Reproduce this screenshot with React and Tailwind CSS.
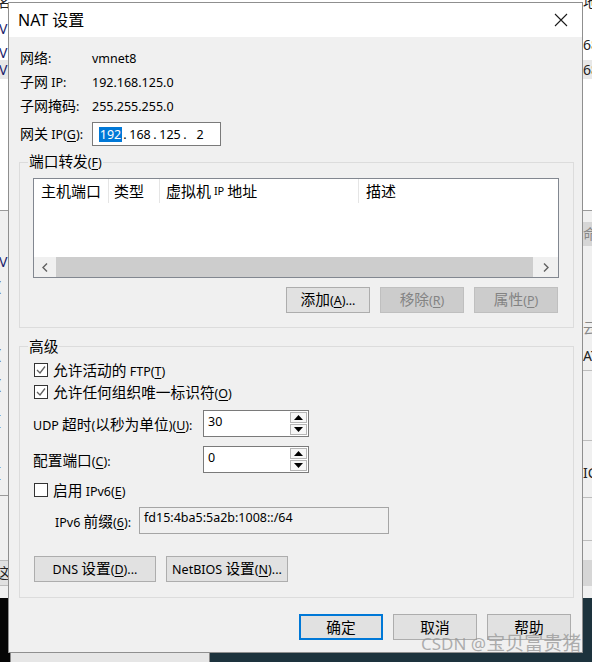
import React from 'react';

const CJK_RE = /([\u2E80-\u9FFF\uFF00-\uFFEF\u3000-\u303F]+)/;

function T({ s, cjk = 'text-[14.7px]', lat = 'text-[12.5px]' }) {
  const parts = s.split(CJK_RE).filter((p) => p !== '');
  return (
    <>
      {parts.map((p, i) =>
        CJK_RE.test(p) ? (
          <span key={i} className={cjk + " font-['Noto_Sans_CJK_SC',sans-serif]"}>
            {p}
          </span>
        ) : (
          <span key={i} className={lat + " font-['Noto_Sans',sans-serif] whitespace-pre"}>
            {p}
          </span>
        )
      )}
    </>
  );
}

function Mn({ pre, k, post = ')' }) {
  return (
    <span className="whitespace-nowrap leading-[18px]">
      <T s={pre + '('} />
      <span className="text-[12.5px] font-['Noto_Sans',sans-serif] underline underline-offset-2">{k}</span>
      <T s={post} />
    </span>
  );
}

function Btn({ children, w = 'w-[84px]', disabled = false, primary = false }) {
  let cls = 'h-[26px] flex items-center justify-center shrink-0 ' + w + ' ';
  if (disabled) cls += 'bg-[#cccccc] border border-[#bfbfbf] text-[#838383]';
  else if (primary) cls += 'bg-[#e1e1e1] border-2 border-[#0078d7] text-black';
  else cls += 'bg-[#e1e1e1] border border-[#adadad] text-black';
  return <div className={cls}>{children}</div>;
}

function Check({ checked }) {
  return (
    <div className="w-[14px] h-[14px] border border-[#333333] bg-white flex items-center justify-center shrink-0">
      {checked && (
        <svg width="12" height="12" viewBox="0 0 12 12">
          <polyline points="2,6 5,9 10,2.5" fill="none" stroke="#606060" strokeWidth="1.3" />
        </svg>
      )}
    </div>
  );
}

function Spin({ value }) {
  return (
    <div className="w-[106px] h-[27px] border border-[#7a7a7a] bg-white flex shrink-0">
      <div className="flex-1 pl-[4px] pt-[2px] text-[12.5px] leading-[18px] font-['Noto_Sans',sans-serif]">{value}</div>
      <div className="w-[18px] flex flex-col gap-[1px] py-[1px] pr-[1px]">
        <div className="flex-1 border border-[#b5b5b5] bg-[#f7f7f7] flex items-center justify-center">
          <svg width="9" height="5" viewBox="0 0 9 5">
            <polygon points="0,5 9,5 4.5,0" fill="#000" />
          </svg>
        </div>
        <div className="flex-1 border border-[#b5b5b5] bg-[#f7f7f7] flex items-center justify-center">
          <svg width="9" height="5" viewBox="0 0 9 5">
            <polygon points="0,0 9,0 4.5,5" fill="#000" />
          </svg>
        </div>
      </div>
    </div>
  );
}

function Legend({ children }) {
  return (
    <div className="absolute left-[8px] top-[-9px] px-[1px] bg-[#f0f0f0] leading-[16px] h-[16px] flex items-center">
      {children}
    </div>
  );
}

function Glyph({ x, y, s, c = 'text-[#1a1a6a]' }) {
  return (
    <div
      className={"absolute text-[14px] leading-[16px] font-['Noto_Sans','Noto_Sans_CJK_SC',sans-serif] " + c}
      style={{ left: x, top: y }}
    >
      {s}
    </div>
  );
}

export default function App() {
  return (
    <div className="relative w-[592px] h-[662px] overflow-hidden bg-white text-black">
      {/* background windows behind the dialog */}
      <div className="absolute left-0 top-[60px] w-[592px] h-[19px] bg-[#e8e8e8]" />
      <div className="absolute left-0 top-[210px] w-[592px] h-[390px] bg-[#f0f0f0] border-t border-[#9a9a9a]" />
      <div className="absolute left-[583px] top-[222px] w-[9px] h-[24px] bg-[#d6d6d6]" />
      <div className="absolute left-[583px] top-[560px] w-[9px] h-[26px] bg-[#d6d6d6]" />
      <div className="absolute left-0 top-[560px] w-[8px] h-[26px] bg-[#e1e1e1] border-y border-[#bdbdbd]" />
      <div className="absolute left-0 top-[495px] w-[8px] h-[1px] bg-[#9a9a9a]" />
      <div className="absolute left-[583px] top-[370px] w-[9px] h-[1px] bg-[#bdbdbd]" />
      <div className="absolute left-[583px] top-[440px] w-[9px] h-[1px] bg-[#bdbdbd]" />
      <div className="absolute left-[583px] top-[497px] w-[9px] h-[1px] bg-[#bdbdbd]" />
      <div className="absolute left-[583px] top-[540px] w-[9px] h-[1px] bg-[#bdbdbd]" />
      <div className="absolute left-0 top-[598px] w-[8px] h-[64px] bg-[#050505]" />
      <div className="absolute left-[583px] top-[598px] w-[9px] h-[64px] bg-[#1d333d]" />
      <div className="absolute left-0 top-[653px] w-[592px] h-[9px] bg-[#1d333d]" />
      <div className="absolute left-0 top-[653px] w-[12px] h-[9px] bg-[#050505]" />
      <div className="absolute left-[10px] top-[653px] w-[200px] h-[9px] bg-[#e6e6e6] border-x border-[#8a8a8a]" />

      <Glyph x={-3} y={-6} s="名" c="text-[#222]" />
      <Glyph x={-1} y={21} s="V" />
      <Glyph x={-1} y={45} s="V" />
      <Glyph x={-1} y={62} s="V" />
      <Glyph x={-1} y={254} s="V" />
      <Glyph x={-3} y={278} s="(" c="text-[#555]" />
      <Glyph x={-3} y={346} s="(" c="text-[#555]" />
      <Glyph x={-3} y={376} s="(" c="text-[#555]" />
      <Glyph x={-4} y={412} s="[" c="text-[#333]" />
      <Glyph x={-4} y={464} s="[" c="text-[#333]" />
      <Glyph x={-4} y={565} s="这" c="text-[#222]" />
      <Glyph x={583} y={-6} s="地" c="text-[#222]" />
      <Glyph x={583} y={37} s="68" c="text-[#222]" />
      <Glyph x={583} y={62} s="68" c="text-[#222]" />
      <Glyph x={583} y={226} s="命" c="text-[#888]" />
      <Glyph x={583} y={320} s="云" c="text-[#888]" />
      <Glyph x={583} y={348} s="AT" c="text-[#222]" />
      <Glyph x={583} y={465} s="IC" c="text-[#222]" />

      {/* dialog window */}
      <div className="absolute left-[8px] top-[2px] w-[575px] h-[651px] border border-[#8f8f8f] bg-[#f0f0f0] flex flex-col">
        {/* title bar */}
        <div className="h-[34px] bg-white flex items-center justify-between pl-[9px] pr-[14px] shrink-0">
          <div className="leading-[20px] -mt-[1px]">
            <T s="NAT 设置" cjk="text-[16px]" lat="text-[16px]" />
          </div>
          <svg width="14" height="14" viewBox="0 0 14 14">
            <path d="M1 1 L13 13 M13 1 L1 13" stroke="#1a1a1a" strokeWidth="1.1" fill="none" />
          </svg>
        </div>

        {/* info rows */}
        <div className="mt-[8px] pl-[11px] flex flex-col">
          <div className="h-[25px] flex items-center">
            <div className="w-[72px] leading-[18px]"><T s="网络:" cjk="text-[14px]" /></div>
            <div className="leading-[18px]"><T s="vmnet8" /></div>
          </div>
          <div className="h-[24px] flex items-center">
            <div className="w-[72px] leading-[18px]"><T s="子网 IP:" cjk="text-[14px]" /></div>
            <div className="leading-[18px]"><T s="192.168.125.0" /></div>
          </div>
          <div className="h-[24px] flex items-center">
            <div className="w-[72px] leading-[18px]"><T s="子网掩码:" cjk="text-[14px]" /></div>
            <div className="leading-[18px]"><T s="255.255.255.0" /></div>
          </div>
          <div className="mt-[4px] h-[24px] flex items-center">
            <div className="w-[72px] leading-[18px]">
              <span className="whitespace-nowrap">
                <T s="网关 IP(" cjk="text-[14px]" />
                <span className="text-[12.5px] font-['Noto_Sans',sans-serif] underline underline-offset-2">G</span>
                <T s="):" />
              </span>
            </div>
            <div className="w-[129px] h-[24px] border border-[#7a7a7a] bg-white flex items-center pl-[6px] text-[12.5px] font-['Noto_Sans',sans-serif] leading-[15px]">
              <span className="w-[23px] flex justify-center items-center">
                <span className="bg-[#0078d7] text-white px-[1px]">192</span>
                <span className="w-[1px] h-[16px] bg-[#e68a00]" />
              </span>
              <span className="w-[6px] text-center">.</span>
              <span className="w-[24px] text-center">168</span>
              <span className="w-[6px] text-center">.</span>
              <span className="w-[24px] text-center">125</span>
              <span className="w-[6px] text-center">.</span>
              <span className="w-[24px] text-center">2</span>
            </div>
          </div>
        </div>

        {/* port forwarding group */}
        <div className="relative mt-[16px] ml-[10px] w-[555px] h-[166px] border border-[#dcdcdc] pt-[15px] pl-[13px] shrink-0">
          <Legend>
            <Mn pre="端口转发" k="F" />
          </Legend>
          <div className="w-[526px] h-[100px] border border-[#828790] bg-white flex flex-col">
            <div className="h-[24px] flex shrink-0 leading-[18px]">
              <div className="w-[75px] pl-[7px] flex items-center border-r border-[#e5e5e5]"><T s="主机端口" cjk="text-[15px]" /></div>
              <div className="w-[51px] pl-[5px] flex items-center border-r border-[#e5e5e5]"><T s="类型" cjk="text-[15px]" /></div>
              <div className="w-[199px] pl-[6px] flex items-center border-r border-[#e5e5e5]"><T s="虚拟机 IP 地址" cjk="text-[15px]" lat="text-[11px]" /></div>
              <div className="flex-1 pl-[7px] flex items-center"><T s="描述" cjk="text-[15px]" /></div>
            </div>
            <div className="flex-1" />
            <div className="h-[20px] flex shrink-0">
              <div className="w-[22px] bg-[#f0f0f0] flex items-center justify-center">
                <svg width="6" height="9" viewBox="0 0 6 9">
                  <polyline points="5,0.5 1,4.5 5,8.5" fill="none" stroke="#606060" strokeWidth="1.4" />
                </svg>
              </div>
              <div className="flex-1 bg-[#cdcdcd]" />
              <div className="w-[25px] bg-[#f0f0f0] flex items-center justify-center">
                <svg width="6" height="9" viewBox="0 0 6 9">
                  <polyline points="1,0.5 5,4.5 1,8.5" fill="none" stroke="#606060" strokeWidth="1.4" />
                </svg>
              </div>
            </div>
          </div>
          <div className="w-[525px] mt-[9px] flex justify-end gap-[10px]">
            <Btn><Mn pre="添加" k="A" post=")..." /></Btn>
            <Btn disabled><Mn pre="移除" k="R" /></Btn>
            <Btn disabled><Mn pre="属性" k="P" /></Btn>
          </div>
        </div>

        {/* advanced group */}
        <div className="relative mt-[18px] ml-[10px] w-[555px] h-[252px] border border-[#dcdcdc] pt-[12px] pl-[13px] shrink-0 flex flex-col">
          <Legend>
            <span className="leading-[18px]"><T s="高级" /></span>
          </Legend>
          <div className="h-[22px] flex items-center pl-[1px]">
            <Check checked />
            <div className="ml-[5px]"><Mn pre="允许活动的 FTP" k="T" /></div>
          </div>
          <div className="h-[22px] flex items-center pl-[1px]">
            <Check checked />
            <div className="ml-[5px]"><Mn pre="允许任何组织唯一标识符" k="O" /></div>
          </div>
          <div className="mt-[7px] h-[27px] flex items-center">
            <div className="w-[170px]"><Mn pre="UDP 超时(以秒为单位)" k="U" post="):" /></div>
            <Spin value="30" />
          </div>
          <div className="mt-[9px] h-[27px] flex items-center">
            <div className="w-[170px]"><Mn pre="配置端口" k="C" post="):" /></div>
            <Spin value="0" />
          </div>
          <div className="mt-[6px] h-[22px] flex items-center pl-[1px]">
            <Check checked={false} />
            <div className="ml-[5px]"><Mn pre="启用 IPv6" k="E" /></div>
          </div>
          <div className="mt-[6px] h-[27px] flex items-center pl-[22px]">
            <div className="w-[84px]"><Mn pre="IPv6 前缀" k="6" post="):" /></div>
            <div className="w-[250px] h-[27px] border border-[#a5a5a5] bg-[#f0f0f0] pl-[4px] pt-[1px] text-[12.5px] leading-[18px] font-['Noto_Sans',sans-serif]">
              fd15:4ba5:5a2b:1008::/64
            </div>
          </div>
          <div className="mt-[22px] flex gap-[10px] pl-[1px]">
            <Btn w="w-[122px]"><Mn pre="DNS 设置" k="D" post=")..." /></Btn>
            <Btn w="w-[122px]"><Mn pre="NetBIOS 设置" k="N" post=")..." /></Btn>
          </div>
        </div>

        {/* dialog buttons */}
        <div className="mt-[16px] flex justify-end gap-[10px] pr-[11px]">
          <Btn primary><T s="确定" /></Btn>
          <Btn><T s="取消" /></Btn>
          <Btn><T s="帮助" /></Btn>
        </div>
      </div>

      {/* watermark */}
      <div className="absolute left-[421px] top-[630px] leading-[24px] text-[rgba(150,150,150,0.75)] whitespace-nowrap">
        <span className="text-[17px] font-['Noto_Sans',sans-serif]">CSDN @</span>
        <span className="text-[19px] font-['Noto_Sans_CJK_SC',sans-serif]">宝贝富贵猪</span>
      </div>
    </div>
  );
}
